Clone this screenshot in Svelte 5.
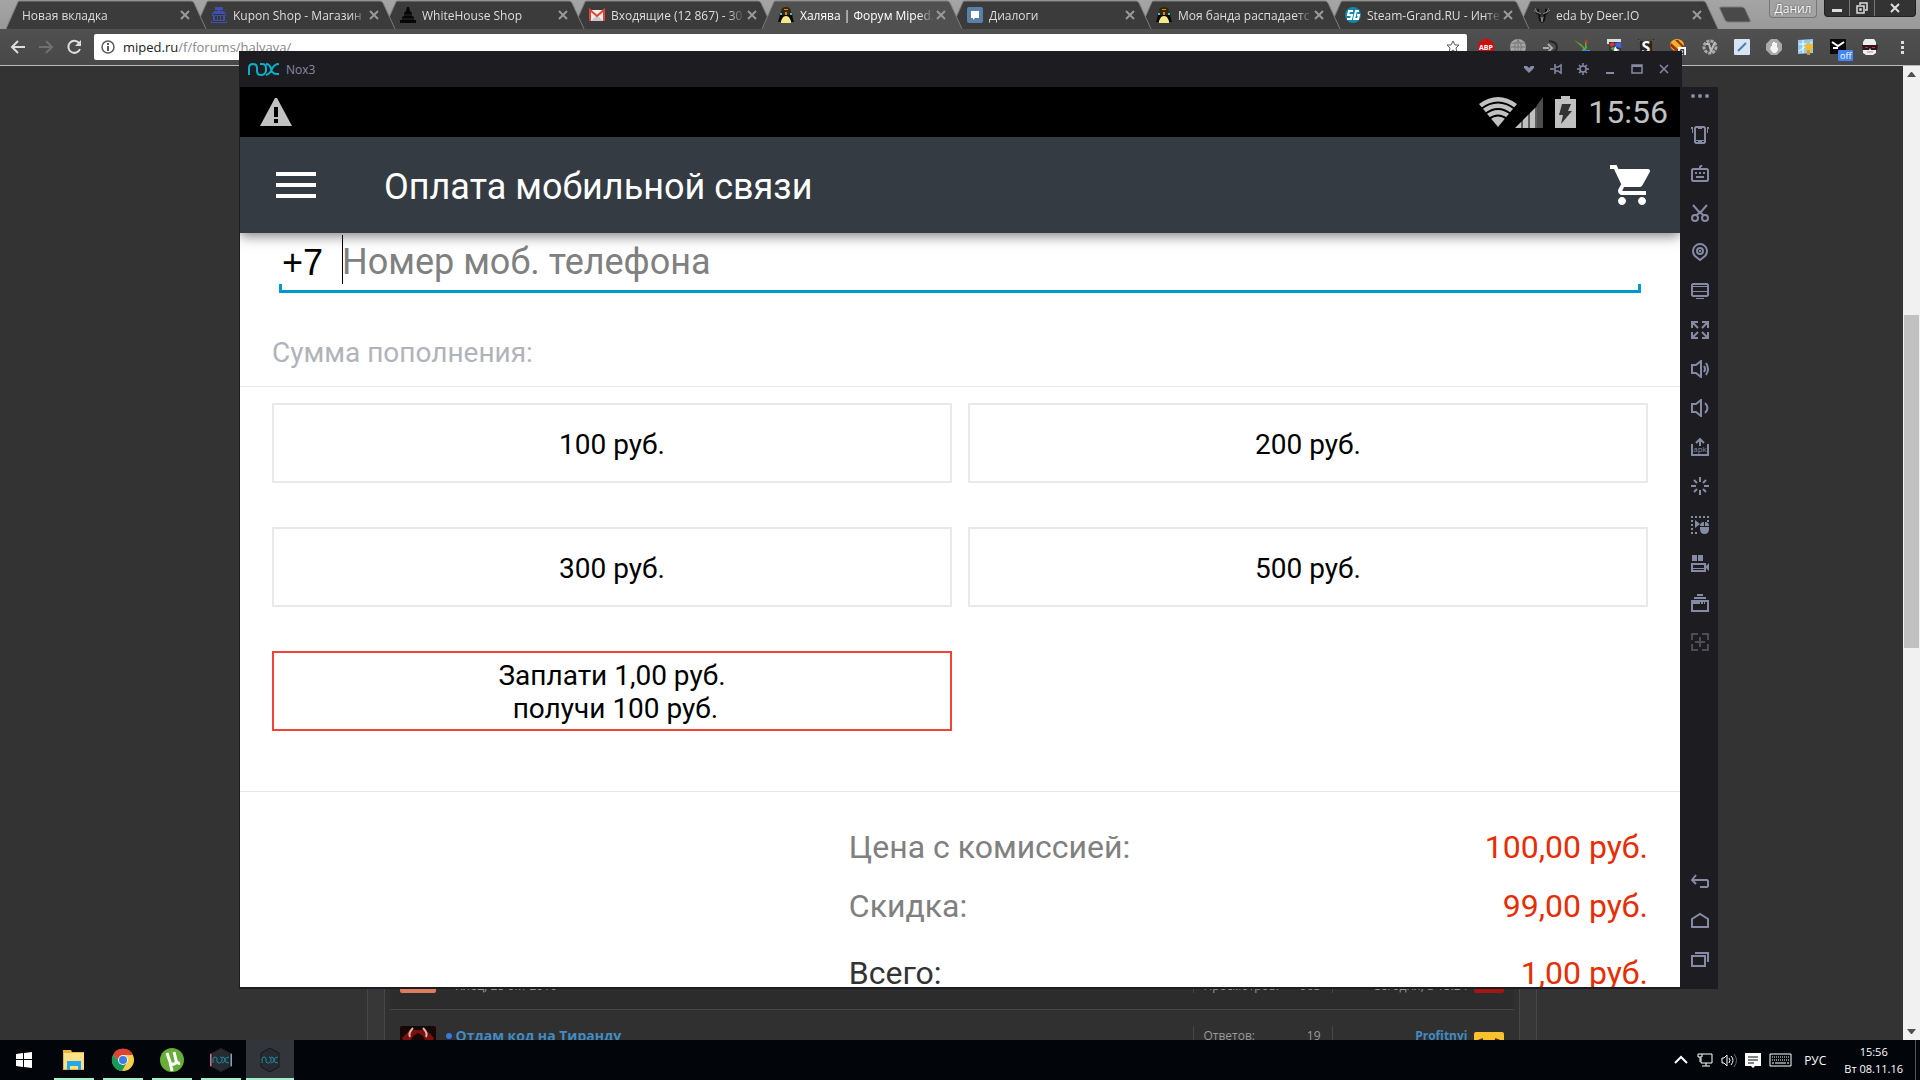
<script lang="ts">
    type Glyph = { label: string; stroke?: string; fill?: string; text?: string; dim?: boolean };

    const tabs = [
        { title: 'Новая вкладка', icon: '' },
        { title: 'Kupon Shop - Магазин', icon: 'kupon' },
        { title: 'WhiteHouse Shop', icon: 'house' },
        { title: 'Входящие (12 867) - 30', icon: 'gmail' },
        { title: 'Халява | Форум Miped.', icon: 'miped', active: true },
        { title: 'Диалоги', icon: 'vk' },
        { title: 'Моя банда распадаетс', icon: 'miped' },
        { title: 'Steam-Grand.RU - Инте', icon: 'steam' },
        { title: 'eda by Deer.IO', icon: 'deer' }
    ];

    const extensions = ['abp', 'globe', 'arrow', 'bird', 'cube', 's', 'bee', 'gear', 'pen', 'hand', 'map', 'mail', 'mask'];

    const tools: Glyph[] = [
        { label: 'Ещё', fill: 'M0 9a2 2 0 1 0 4 0a2 2 0 1 0-4 0M7 9a2 2 0 1 0 4 0a2 2 0 1 0-4 0M14 9a2 2 0 1 0 4 0a2 2 0 1 0-4 0' },
        { label: 'Встряхнуть', stroke: 'M5 1h8l1 1v14l-1 1H5l-1-1V2zM7 2h4', fill: 'M4 14h10v1h-3v1H7v-1H4zM0 1h2v6H1V3H0zM18 1h-2v6h1V3h1z' },
        { label: 'Клавиатура', stroke: 'M2 4h14l1 1v10l-1 1H2l-1-1V5zM9 4V2l2-2M5 12h8', fill: 'M4 7h2v2H4zM8 7h2v2H8zM12 7h2v2h-2z' },
        { label: 'Ножницы', stroke: 'M2 1l7 8l7-8M1 14a3 3 0 1 0 6 0a3 3 0 1 0-6 0M11 14a3 3 0 1 0 6 0a3 3 0 1 0-6 0M6 11l3-3l3 3' },
        { label: 'Местоположение', stroke: 'M9 17L4 13A7 7 0 1 1 14 13zM6 8a3 3 0 1 0 6 0a3 3 0 1 0-6 0', fill: 'M8 7h2v2H8z' },
        { label: 'Экран', stroke: 'M2 2h14l1 1v10l-1 1H2l-1-1V3z', fill: 'M1 4h16v1H1zM1 9h16v1H1zM5 16h8v1H5z' },
        { label: 'Во весь экран', stroke: 'M1 7V1h6M1 1l6 6M11 1h6v6M17 1l-6 6M1 11v6h6M1 17l6-6M17 11v6h-6M17 17l-6-6' },
        { label: 'Громче', stroke: 'M10 1v16l-5-4H1V5h4zM13 6q2 3 0 6M15 3q4 6 0 12' },
        { label: 'Тише', stroke: 'M10 1v16l-5-4H1V5h4zM14 4q5 5 0 10' },
        { label: 'Установить APK', stroke: 'M1 6v11h16V6M9 8V1M5 5l4-4l4 4', text: 'apk' },
        { label: 'Очистить', stroke: 'M9 0v5M9 13v5M0 9h5M13 9h5M3 3l3 3M12 12l3 3M15 3l-3 3M6 12l-3 3' },
        { label: 'Макрос', fill: 'M0 0h2v2H0zM4 0h2v2H4zM8 0h2v2H8zM12 0h2v2h-2zM16 0h2v2h-2zM0 4h2v2H0zM0 8h2v2H0zM0 12h2v2H0zM0 16h2v2H0zM4 16h2v2H4zM16 4h2v2h-2zM4 4l5 4l-5 4zM9 10q0-4 4-4v4zM14 10V6q4 0 4 4zM9 11h9v2q0 5-4.500 5T9 13z' },
        { label: 'Запись видео', stroke: 'M1 9h13v7H1z', fill: 'M1 13h13v1H1zM1 0h5v6H1zM7 0h5v6H7zM15 11l3-3v8l-3-3z' },
        { label: 'Мультиокна', stroke: 'M1 7h16v10H1z', fill: 'M6 0h6v2H6zM3 3h12v2H3zM1 7h8v3H1zM10 8h2v2h-2zM13 8h1v2h-1zM16 8h1v2h-1z' },
        { label: 'Добавить', stroke: 'M1 7V1h6M11 1h6v6M17 11v6h-6M7 17H1v-6M9 4v10M4 9h10', dim: true }
    ];

    const navKeys: Glyph[] = [
        { label: 'Назад', stroke: 'M5 2L1 7l4 4M1 7h15l1 1v5l-1 1H9' },
        { label: 'Домой', stroke: 'M1 15V7l8-5l8 5v8z' },
        { label: 'Недавние', stroke: 'M1 5h13v10H1zM4 2h13v9' }
    ];

    const windowKeys: Glyph[] = [
        { label: 'Меню', fill: 'M1 3h3l2 2l2-2h3v2l-5 5l-5-5z' },
        { label: 'Закрепить', stroke: 'M0 6h4M5 1v10M5 4h3l3-2v8L8 8H5' },
        { label: 'Настройки', stroke: 'M3 6a3 3 0 1 0 6 0a3 3 0 1 0-6 0M6 0v3M6 9v3M0 6h3M9 6h3M2 2l2 2M8 8l2 2M10 2L8 4M4 8l-2 2' },
        { label: 'Свернуть', fill: 'M2 9h8v2H2z' },
        { label: 'Развернуть', stroke: 'M1 2h10v8H1z', fill: 'M1 2h10v2H1z' },
        { label: 'Закрыть', stroke: 'M2 2l8 8M10 2l-8 8' }
    ];

    const amounts = ['100 руб.', '200 руб.', '300 руб.', '500 руб.', 'Заплати 1,00 руб.\n получи 100 руб.'];

    const totals = [
        { label: 'Цена с комиссией:', value: '100,00 руб.' },
        { label: 'Скидка:', value: '99,00 руб.' },
        { label: 'Всего:', value: '1,00 руб.', total: true }
    ];

    const tasks = ['explorer', 'chrome', 'utorrent', 'noxmulti', 'nox'];

    let selected = $state(4);
    let phone = $state('');
</script>

{#snippet glyph(g: Glyph, size: number, width: number)}
    <svg class="glyph" width={size} height={size} viewBox="0 0 {size} {size}" aria-hidden="true">
        {#if g.stroke}<path d={g.stroke} fill="none" stroke="currentColor" stroke-width={width} />{/if}
        {#if g.fill}<path d={g.fill} fill="currentColor" />{/if}
        {#if g.text}<text x="9" y="14" font-size="8" text-anchor="middle" fill="currentColor">{g.text}</text>{/if}
    </svg>
{/snippet}

{#snippet favicon(name: string)}
    <svg width="16" height="16" viewBox="0 0 16 16" aria-hidden="true">
        {#if name === 'kupon'}
            <path fill="#3f4fb0" d="M4 0h8v3H9v1h4l2 3v2h-1v5h2v2H0v-2h2V9H1V7l2-3h4V3H4z" />
            <path fill="#35353a" d="M4 9h2v4H4zM7 9h2v4H7zM10 9h2v4h-2zM2 7h12v1H2zM1 14h14v1H1z" />
        {:else if name === 'house'}
            <path fill="#060606" d="M7 0h2l1 4l2 2v3l2 1v3h2v3H0v-3h2v-3l2-1V6l2-2z" />
            <path stroke="#2c2c2c" d="M4 8h8M2 12h12" />
        {:else if name === 'gmail'}
            <path fill="#eee" d="M0 3h16v11H0z" />
            <path fill="#c9c9c9" d="M2 14l6-6l6 6z" />
            <path fill="none" stroke="#e0432f" stroke-width="2" d="M1 14V3l7 6l7-6v11" />
        {:else if name === 'miped'}
            <path fill="#38250b" d="M3 5q0-5 5-5t5 5l2 3l-2 1H3L1 8z" />
            <path fill="#090909" d="M2 8h12l2 7H0z" />
            <path fill="#f4e889" d="M4 12q1-3 4-3t4 3l1 2v2H3v-2z" />
            <path fill="#37bfe0" d="M2 6h2v2H2zM12 6h2v2h-2z" />
            <path fill="#c98a20" d="M6 2h4v1H6zM7 5h2v3H7z" />
        {:else if name === 'vk'}
            <rect width="16" height="16" rx="2" fill="#5a80aa" />
            <path fill="#fff" d="M4 4h8v7H8l-2 2v-2H4z" />
        {:else if name === 'steam'}
            <circle cx="8" cy="8" r="8" fill="#1787a8" />
            <path fill="none" stroke="#fff" stroke-width="2" d="M8 4H4L3 8h4l-1 4H2M14 4h-3l-2 8h4l1-4h-2" />
        {:else if name === 'deer'}
            <path fill="none" stroke="#111" stroke-width="2" d="M1 1l2 5l4 2M15 1l-2 5l-4 2M4 2v4M12 2v4M5 8l1 5l2 2l2-2l1-5" />
            <path fill="none" stroke="#8b8b8b" d="M0 3l4 3M16 3l-4 3M1 1l2 4l4 2M15 1l-2 4l-4 2M7 10l1 5l1-5" />
        {/if}
    </svg>
{/snippet}

{#snippet extension(name: string)}
    <svg width="16" height="16" viewBox="0 0 16 16" aria-hidden="true">
        {#if name === 'abp'}
            <path fill="#d00d0d" d="M5 0h6l5 5v6l-5 5H5l-5-5V5z" />
            <text x="8" y="11" font-size="7" font-weight="700" text-anchor="middle" fill="#fff">ABP</text>
        {:else if name === 'globe'}
            <circle cx="8" cy="8" r="8" fill="#a5a5a5" />
            <path fill="none" stroke="#777" d="M0 8h16M2 4h12M2 12h12M8 0v16M8 1q-7 7 0 14M8 1q7 7 0 14" />
        {:else if name === 'arrow'}
            <path fill="none" stroke="#252525" stroke-width="2" d="M7 2q8 1 8 6t-7 6" />
            <path fill="none" stroke="#aaa" stroke-width="2" d="M1 9h6M6 5l4 4l-4 4" />
        {:else if name === 'bird'}
            <path fill="#5eaa2d" d="M0 1l7 4l4 4V3l1-2l1 8l-5 6l1-6z" />
            <path fill="#b83c2a" d="M11 2l2-2l1 4h-2z" />
            <path fill="#4285f4" d="M8 11h8v5H8z" />
        {:else if name === 'cube'}
            <path fill="#ddd" d="M1 0h14v5H1z" />
            <path fill="#334" d="M3 3h12v12H3z" />
            <path fill="#db372d" d="M3 5l4-2l2 3l-4 2z" />
            <path fill="#4663df" d="M9 4l6-1v6l-5-1z" />
            <path fill="#49a644" d="M4 9l4-1l1 5z" />
            <path fill="#fff" d="M9 7l2 3l3 1l-3 1l-2 3l-1-4z" />
        {:else if name === 's'}
            <path fill="#28251f" d="M0 0h16v16H0z" />
            <path fill="none" stroke="#767064" d="M1 1h14v14H1z" />
            <text x="8" y="14" font-size="16" font-weight="700" text-anchor="middle" fill="#fff">S</text>
        {:else if name === 'bee'}
            <ellipse cx="7" cy="6" rx="7" ry="6" fill="#edb329" />
            <path fill="#a62912" d="M1 4l9 8H6L0 7zM8 1l6 6v3L5 1z" />
            <path fill="#fff" d="M8 8h8v8H8z" />
            <text x="12" y="15" font-size="8" font-weight="700" text-anchor="middle" fill="#222">q</text>
        {:else if name === 'gear'}
            <circle cx="8" cy="8" r="6" fill="none" stroke="#aaa" stroke-width="3" stroke-dasharray="3 1" />
            <path fill="none" stroke="#bbb" stroke-width="2" d="M4 5h3l2 7l4-9" />
        {:else if name === 'pen'}
            <rect width="16" height="16" rx="1" fill="#d7e4f4" />
            <path stroke="#5179b7" stroke-width="2" d="M4 12l8-8" />
        {:else if name === 'hand'}
            <path fill="#aaa" d="M5 0h6l5 5v6l-5 5H5l-5-5V5z" />
            <path fill="#f4f4f4" d="M5 7h1V4h1V3h2v1h2v5l1-1v3l-2 3H7l-3-4z" />
        {:else if name === 'map'}
            <path fill="#95caf0" d="M0 1l15-1v14L0 15z" />
            <path stroke="#fff" d="M1 5h13M5 1v13M1 12L14 3" />
            <circle cx="11" cy="8" r="4" fill="#edbd34" />
            <path fill="#d49a20" d="M9 11h3v5H9z" />
        {:else if name === 'mail'}
            <path fill="#080808" d="M0 0h16v15H0z" />
            <path fill="none" stroke="#fff" stroke-width="2" d="M2 3l6 4l6-4M3 9h5" />
        {:else if name === 'mask'}
            <path fill="#eee" d="M3 0h9l2 3v11l-3 2H4l-3-2V3z" />
            <path fill="#2e171b" d="M0 6h16l-1 5H9L8 9l-1 2H1z" />
            <path fill="#d02e36" d="M3 8h3v1H3zM10 8h3v1h-3z" />
            <path stroke="#999" d="M5 13h6" />
        {/if}
    </svg>
{/snippet}

{#snippet taskIcon(name: string)}
    <svg width="24" height="24" viewBox="0 0 24 24" aria-hidden="true">
        {#if name === 'explorer'}
            <path fill="#e8b73c" d="M1 2h8l1 2h12v18H1z" />
            <path fill="#ffe08a" d="M2 5h20v16H2z" />
            <path fill="#24a9e8" d="M5 22v-9h14v9h-3v-4H8v4z" />
        {:else if name === 'chrome'}
            <circle cx="12" cy="12" r="11" fill="#f6cf4a" />
            <path fill="#dc4437" d="M2 7A11 11 0 0 1 22 7H12L8 13z" />
            <path fill="#159a5b" d="M2 7a11 11 0 0 0 9 16l5-9l-8-1z" />
            <circle cx="12" cy="12" r="5" fill="#f3f3f3" />
            <circle cx="12" cy="12" r="4" fill="#3d7de4" />
        {:else if name === 'utorrent'}
            <circle cx="12" cy="12" r="12" fill="#68ad38" />
            <path fill="none" stroke="#fff" stroke-width="3" d="M7 5l3 9q1 3 4 2t2-4l-2-8M16 12q1 4 4 3M10 14l2 9" />
        {:else}
            {#if name === 'noxmulti'}
                <path fill="#cf65c4" d="M12 1L1 6v12l11 5z" />
                <path fill="#55b4dc" d="M12 1l11 5v12l-11 5z" />
                <path fill="#eb9a61" d="M2 6h2v12H2zM20 6h2v12h-2z" />
            {/if}
            <path fill="#292b32" stroke="#15171c" d="M12 0l9 5v14l-9 5l-9-5V5z" />
            <path fill="none" stroke="#158ea3" stroke-width="1" d="M4 15v-4q0-2 2-2t2 2v2q0 2 2 2t3-2v-2q0-2-2-2M13 9q3 0 3 3t4 3M20 9q-3 0-4 3t-3 3" />
        {/if}
    </svg>
{/snippet}

<div class="desktop">
    <nav class="tab-strip" aria-label="Вкладки">
        {#each tabs as tab, i}
            <div class="tab" class:active={tab.active} style="z-index: {tab.active ? 20 : 10 - i}">
                <svg class="tab-shape" viewBox="0 0 202 29" aria-hidden="true">
                    <path d="M0 29L12 2Q12 1 14 1H186Q188 1 189 3L201 29" />
                </svg>
                {#if tab.icon}{@render favicon(tab.icon)}{/if}
                <a class="tab-title" href="#tab{i}">{tab.title}</a>
                <button class="tab-close" aria-label="Закрыть вкладку">
                    <svg width="10" height="10" viewBox="0 0 10 10"><path d="M1 1l8 8M9 1l-8 8" stroke="currentColor" stroke-width="2" /></svg>
                </button>
            </div>
        {/each}
        <button class="new-tab" aria-label="Новая вкладка">
            <svg width="34" height="17" viewBox="0 0 34 17"><path d="M3 1h21q2 0 3 2l5 11q1 2-1 2H10q-2 0-3-2L2 3q-1-2 1-2z" fill="#494949" stroke="#7c7c7c" /></svg>
        </button>
        <button class="profile">Данил</button>
        <div class="window-buttons">
            <button aria-label="Свернуть"><svg width="12" height="12" viewBox="0 0 12 12"><path d="M1 7h10v3H1z" fill="#ddd" /></svg></button>
            <button aria-label="Восстановить"><svg width="12" height="12" viewBox="0 0 12 12"><path d="M4 3V1h7v7H9M1 4h7v7H1zM4 7h1v1H4z" fill="none" stroke="#ddd" stroke-width="1.500" /></svg></button>
            <button class="wide" aria-label="Закрыть"><svg width="12" height="12" viewBox="0 0 12 12"><path d="M2 2l8 8M10 2l-8 8" stroke="#ddd" stroke-width="2" /></svg></button>
        </div>
    </nav>

    <header class="toolbar">
        <button aria-label="Назад"><svg width="16" height="16" viewBox="0 0 16 16"><path d="M15 8H2M8 2L2 8l6 6" fill="none" stroke="#ddd" stroke-width="2" /></svg></button>
        <button aria-label="Вперёд" disabled><svg width="16" height="16" viewBox="0 0 16 16"><path d="M1 8h13M8 2l6 6l-6 6" fill="none" stroke="#707070" stroke-width="2" /></svg></button>
        <button aria-label="Обновить"><svg width="16" height="16" viewBox="0 0 16 16"><path d="M13 4a6 6 0 1 0 1 6" fill="none" stroke="#ddd" stroke-width="2" /><path d="M15 1v6H9z" fill="#ddd" /></svg></button>
        <div class="address">
            <svg width="14" height="14" viewBox="0 0 14 14" aria-hidden="true"><circle cx="7" cy="7" r="6" fill="none" stroke="#5a5a5a" stroke-width="1.500" /><path d="M6 6h2v5H6zM6 3h2v2H6z" fill="#5a5a5a" /></svg>
            <a class="url" href="#page">miped.ru<span>/f/forums/halyava/</span></a>
            <button aria-label="В закладки"><svg width="14" height="14" viewBox="0 0 14 14"><path d="M7 1l2 4h4l-3 3l1 5l-4-3l-4 3l1-5l-3-3h4z" fill="none" stroke="#5a5a5a" /></svg></button>
        </div>
        <div class="extensions">
            {#each extensions as name}
                <button aria-label={name}>
                    {@render extension(name)}
                    {#if name === 'mail'}<span class="badge">off</span>{/if}
                </button>
            {/each}
            <button aria-label="Меню"><svg width="16" height="16" viewBox="0 0 16 16"><path d="M7 2h3v3H7zM7 7h3v3H7zM7 12h3v3H7z" fill="#ddd" /></svg></button>
        </div>
    </header>

    <div class="viewport">
        <main class="page">
            <div class="forum">
                <div class="filler"></div>
                <div class="thread old">
                    <span class="avatar peach"></span>
                    <div class="thread-name"><span>Ялец, 28 окт 2016</span></div>
                    <div class="stat"><span>Просмотров:</span><span>963</span></div>
                    <div class="last"><span>Сегодня, в 15:24</span></div>
                    <span class="mini red"></span>
                </div>
                <div class="thread new">
                    <svg class="avatar" viewBox="0 0 36 36" aria-hidden="true">
                        <path fill="#180707" d="M0 0h36v36H0z" />
                        <path fill="#7c100f" d="M2 12l8-8h16l8 8l-4 8H6z" />
                        <path fill="#180707" d="M10 16l3-6l5-3l5 3l3 6z" />
                        <path fill="none" stroke="#d9b9ae" stroke-width="2" d="M13 2q-5 5-3 9M23 2q5 5 3 9" />
                    </svg>
                    <div class="thread-name"><i></i><a href="#thread">Отдам код на Тиранду</a></div>
                    <div class="stat"><span>Ответов:</span><span>19</span></div>
                    <div class="last"><a href="#user">Profitnyi</a></div>
                    <svg class="mini yellow" viewBox="0 0 30 30" aria-hidden="true"><path d="M4 9l5-2M21 7l5 2" stroke="#4a3410" stroke-width="2" /></svg>
                </div>
            </div>
        </main>
        <div class="scrollbar" aria-hidden="true">
            <svg width="9" height="5" viewBox="0 0 9 5"><path d="M0 5l4-5h1l4 5z" fill="#505050" /></svg>
            <div class="track"><div class="thumb"></div></div>
            <svg width="9" height="5" viewBox="0 0 9 5"><path d="M0 0h9L5 5H4z" fill="#505050" /></svg>
        </div>
    </div>

    <section class="emulator" aria-label="Nox3">
        <div class="title-bar">
            <svg width="31" height="13" viewBox="0 0 31 13" aria-hidden="true">
                <path d="M1 12V5q0-4 4-4t4 4v3q0 4 4 4t5-4V5q0-4-4-4h-2M18 1q4 0 5 5t6 5h2M31 1q-5 0-7 5t-6 6" fill="none" stroke="#08afc8" stroke-width="2" />
            </svg>
            <span class="title">Nox3</span>
            {#each windowKeys as key}
                <button aria-label={key.label}>{@render glyph(key, 12, 1.5)}</button>
            {/each}
        </div>

        <div class="screen">
            <div class="status-bar">
                <svg width="32" height="28" viewBox="0 0 32 28" aria-hidden="true">
                    <path d="M15 0h2l15 28H0z" fill="#c1c1c1" />
                    <path d="M14 9h4v10h-4zM14 21h4v4h-4z" fill="#000" />
                </svg>
                <div class="indicators">
                    <svg width="64" height="32" viewBox="0 0 64 32" aria-hidden="true">
                        <path d="M0 8Q19-6 38 8L19 31z" fill="#c1c1c1" />
                        <path d="M2 13q17-13 34 0M6 18q13-10 26 0M10 23q9-7 18 0" fill="none" stroke="#000" stroke-width="2" />
                        <path d="M36 32L58 10v22z" fill="#c1c1c1" />
                        <path d="M58 9l6-8v31h-6z" fill="#4d4d4d" />
                        <path d="M43 20v12M50 10v22M57 8v24" stroke="#000" />
                    </svg>
                    <svg width="21" height="32" viewBox="0 0 21 32" aria-hidden="true">
                        <path d="M6 0h9v3h6v29H0V3h6z" fill="#c1c1c1" />
                        <path d="M7 8h9l-3 7h4L6 28l2-9H4z" fill="#333" />
                    </svg>
                    <time>15:56</time>
                </div>
            </div>

            <div class="app-bar">
                <button aria-label="Меню"><svg width="40" height="26" viewBox="0 0 40 26"><path d="M0 2h40M0 13h40M0 24h40" stroke="#fff" stroke-width="4" /></svg></button>
                <h1>Оплата мобильной связи</h1>
                <button aria-label="Корзина">
                    <svg width="48" height="48" viewBox="0 0 24 24"><path fill="#fff" d="M7 18c-1.100 0-1.990.9-1.990 2S5.900 22 7 22s2-.9 2-2-.9-2-2-2zM1 2v2h2l3.600 7.590-1.350 2.450c-.16.28-.25.61-.25.96 0 1.100.9 2 2 2h12v-2H7.420c-.14 0-.25-.11-.25-.25l.03-.12.9-1.630h7.450c.75 0 1.410-.41 1.750-1.030l3.580-6.490c.08-.14.12-.31.12-.48 0-.55-.45-1-1-1H5.210l-.94-2H1zm16 16c-1.100 0-1.990.9-1.990 2s.89 2 1.990 2 2-.9 2-2-.9-2-2-2z" /></svg>
                </button>
            </div>

            <form class="payment">
                <div class="phone">
                    <label for="phone">+7</label>
                    <div class="phone-input">
                        <span class="caret"></span>
                        <input id="phone" type="tel" placeholder="Номер моб. телефона" bind:value={phone} />
                    </div>
                </div>
                <div class="underline"></div>
                <h2 id="sum">Сумма пополнения:</h2>
                <div class="amounts" role="group" aria-labelledby="sum">
                    {#each amounts as amount, i}
                        <button type="button" class:selected={selected === i} onclick={() => (selected = i)}>{amount}</button>
                    {/each}
                </div>
                <dl class="totals">
                    {#each totals as row}
                        <div class:total={row.total}>
                            <dt>{row.label}</dt>
                            <dd>{row.value}</dd>
                        </div>
                    {/each}
                </dl>
            </form>
        </div>

        <aside class="side">
            {#each tools as tool}
                <button class:dim={tool.dim} aria-label={tool.label}>{@render glyph(tool, 18, 2)}</button>
            {/each}
            <div class="filler"></div>
            {#each navKeys as key}
                <button aria-label={key.label}>{@render glyph(key, 18, 2)}</button>
            {/each}
        </aside>
    </section>

    <footer class="taskbar">
        <button class="start" aria-label="Пуск">
            <svg width="16" height="16" viewBox="0 0 16 16"><path fill="#fff" d="M0 2l7-1v6H0zM8 1l8-1v7H8zM0 8h7v7l-7-1zM8 8h8v8l-8-1z" /></svg>
        </button>
        {#each tasks as name}
            <button class="task" class:current={name === 'nox'} aria-label={name}>{@render taskIcon(name)}</button>
        {/each}
        <div class="tray">
            <button aria-label="Скрытые значки"><svg width="16" height="16" viewBox="0 0 16 16"><path d="M2 11l6-6l6 6" fill="none" stroke="#fff" stroke-width="2" /></svg></button>
            <button aria-label="Сеть"><svg width="16" height="16" viewBox="0 0 16 16"><path d="M5 2h10v9H4V6M9 11v3M5 14h8M1 2h4v3H1zM3 5v5" fill="none" stroke="#fff" /></svg></button>
            <button aria-label="Громкость"><svg width="16" height="16" viewBox="0 0 16 16"><path d="M1 6h2l3-3v11l-3-3H1zM8 6q2 2 0 5M10 4q4 4 0 9" fill="none" stroke="#fff" /><path d="M13 2q5 6 0 13" fill="none" stroke="#666" /></svg></button>
            <button aria-label="Уведомления"><svg width="16" height="16" viewBox="0 0 16 16"><path d="M0 1h16v13h-6l-2 2l-2-2H0z" fill="#fff" /><path d="M3 5h10M3 8h10M3 11h6" stroke="#02060b" /></svg></button>
            <button aria-label="Клавиатура"><svg width="23" height="14" viewBox="0 0 23 14"><path d="M1 1h21v12H1z" fill="none" stroke="#fff" /><path d="M3 4h17M3 7h17" stroke="#fff" stroke-dasharray="1 1" /><path d="M3 10h2M6 10h11M18 10h2" stroke="#fff" /></svg></button>
            <button class="lang">РУС</button>
            <time class="clock">15:56<br />Вт 08.11.16</time>
        </div>
    </footer>
</div>

<style>
    :global(body) {
        background: #333;
    }

    .desktop {
        position: relative;
        display: flex;
        flex-direction: column;
        height: 100vh;
        overflow: hidden;
        font-family: "Open Sans", "Noto Sans", sans-serif;
        font-size: 12px;
        color: #ddd;
    }

    button {
        display: flex;
        align-items: center;
        justify-content: center;
        padding: 0;
        border: 0;
        background: none;
        color: inherit;
        font: inherit;
    }

    a {
        color: inherit;
        text-decoration: none;
    }

    svg {
        display: block;
        flex: none;
    }

    .tab-strip {
        display: flex;
        height: 29px;
        padding: 0 4px 0 6px;
        background: linear-gradient(#a5a5a5, #999);
        box-sizing: border-box;
    }

    .tab {
        position: relative;
        display: flex;
        flex: 0 1 201px;
        align-items: center;
        gap: 6px;
        min-width: 0;
        margin-right: -12px;
        padding: 1px 17px 0 16px;
        box-sizing: border-box;
    }

    .tab-shape {
        position: absolute;
        inset: 0;
        z-index: -1;
        width: 100%;
        height: 29px;
        fill: #3b3b3b;
        stroke: #7c7c7c;
    }

    .tab.active .tab-shape {
        fill: #505050;
    }

    .tab-title {
        flex: 1;
        min-width: 0;
        margin-right: -4px;
        overflow: hidden;
        white-space: nowrap;
        mask-image: linear-gradient(to left, transparent, #000 16px);
    }

    .tab.active .tab-title {
        color: #fff;
    }

    .tab-close {
        color: #999;
    }

    .new-tab {
        width: 34px;
        height: 17px;
        margin: 6px auto 0 11px;
    }

    .profile {
        width: 48px;
        height: 18px;
        margin-right: 7px;
        border: 1px solid #777;
        border-top: 0;
        border-radius: 0 0 4px 4px;
        background: #a3a3a3;
        color: #fff;
        text-shadow: 0 0 2px #333;
        box-sizing: border-box;
    }

    .window-buttons {
        display: flex;
        height: 17px;
        border: 1px solid #222;
        border-top: 0;
        border-radius: 0 0 4px 4px;
        background: #333;
        box-sizing: border-box;
    }

    .window-buttons button {
        width: 25px;
        border-right: 1px solid #777;
    }

    .window-buttons .wide {
        width: 40px;
        border: 0;
    }

    .toolbar {
        display: flex;
        align-items: center;
        height: 37px;
        padding: 0 10px;
        border-bottom: 1px solid #bbb;
        background: linear-gradient(#505050, #484848);
        box-sizing: border-box;
    }

    .toolbar > button {
        margin-right: 12px;
    }

    .toolbar > .address {
        display: flex;
        flex: 1;
        align-items: center;
        gap: 8px;
        height: 26px;
        margin-right: 11px;
        padding: 0 7px;
        border-radius: 2px;
        background: #fff;
        color: #222;
        box-sizing: border-box;
    }

    .url {
        flex: 1;
        font-size: 13px;
    }

    .url span {
        color: #888;
    }

    .extensions {
        display: flex;
        gap: 16px;
    }

    .extensions button {
        position: relative;
    }

    .badge {
        position: absolute;
        top: 11px;
        left: 8px;
        padding: 0 2px;
        border-radius: 1px;
        background: #4285f4;
        color: #fff;
        font-size: 9px;
        line-height: 11px;
    }

    .viewport {
        display: flex;
        flex: 1;
        min-height: 0;
        background: #333;
    }

    .page {
        display: flex;
        flex: 1;
        justify-content: center;
    }

    .forum {
        display: flex;
        flex-direction: column;
        width: 1170px;
        padding: 0 22px;
        border: solid #474747;
        border-width: 0 1px;
        background: linear-gradient(to right, #373737 16px, #474747 16px, #474747 17px, #303030 17px, #303030 1151px, #474747 1151px, #474747 1152px, #373737 1152px);
        color: #999;
        box-sizing: border-box;
    }

    .filler {
        flex: 1;
    }

    .thread {
        display: flex;
        height: 30px;
        padding: 0 10px;
        overflow: hidden;
        box-sizing: border-box;
    }

    .thread.old {
        align-items: flex-end;
        height: 63px;
        padding-bottom: 16px;
        border-bottom: 1px solid #474747;
        background: #2c2c2c;
        line-height: 14px;
    }

    .thread.new {
        align-items: flex-start;
        padding-top: 16px;
        line-height: 20px;
    }

    .avatar {
        width: 36px;
        height: 36px;
        border-radius: 2px;
    }

    .peach {
        background: #df7c60;
    }

    .thread-name {
        display: flex;
        flex: 1;
        align-items: center;
        padding-left: 20px;
    }

    .thread-name i {
        width: 6px;
        height: 6px;
        margin: 0 4px 0 -10px;
        border-radius: 50%;
        background: #3978dd;
    }

    .thread-name a,
    .last a {
        color: #438bc2;
        font-weight: 700;
    }

    .thread-name a {
        font-size: 14px;
    }

    .stat {
        display: flex;
        justify-content: space-between;
        width: 140px;
        padding: 0 11px 0 10px;
        border: solid #474747;
        border-width: 0 1px;
        box-sizing: border-box;
    }

    .last {
        width: 141px;
        padding-right: 6px;
        text-align: right;
        box-sizing: border-box;
    }

    .mini {
        width: 30px;
        height: 30px;
        border-radius: 2px;
    }

    .red {
        background: #a51512;
    }

    .yellow {
        margin-top: 6px;
        background: #fbc02d;
    }

    .scrollbar {
        display: flex;
        flex-direction: column;
        align-items: center;
        width: 17px;
        padding: 6px 0;
        background: #f1f1f1;
        box-sizing: border-box;
    }

    .track {
        flex: 1;
        width: 100%;
        padding: 0 1px;
        box-sizing: border-box;
    }

    .thumb {
        position: relative;
        top: 25%;
        height: 35%;
        background: #c1c1c1;
    }

    .emulator {
        position: absolute;
        top: 51px;
        right: 202px;
        bottom: 91px;
        left: 239px;
        z-index: 30;
        display: grid;
        grid-template-rows: 36px 1fr;
        grid-template-columns: 1fr 38px;
        color: #868ba5;
    }

    .title-bar {
        display: flex;
        align-items: center;
        gap: 15px;
        margin-right: -2px;
        padding: 0 12px 0 9px;
        background: #1d1c21;
    }

    .title {
        flex: 1;
        margin-left: -8px;
    }

    .screen {
        grid-row: 2;
        display: flex;
        flex-direction: column;
        min-height: 0;
        overflow: hidden;
        border: solid #1d1c21;
        border-width: 0 0 2px 1px;
        background: #fff;
        font-family: Roboto, sans-serif;
    }

    .status-bar {
        display: flex;
        flex: none;
        align-items: center;
        justify-content: space-between;
        height: 50px;
        padding: 0 12px 0 20px;
        background: #000;
        color: #c1c1c1;
        box-sizing: border-box;
    }

    .indicators {
        display: flex;
        align-items: center;
        gap: 12px;
        font-size: 32px;
        line-height: 48px;
    }

    .app-bar {
        position: relative;
        z-index: 1;
        display: flex;
        flex: none;
        align-items: center;
        height: 96px;
        padding: 0 24px 0 36px;
        background: #353b42;
        box-shadow: 0 3px 12px rgba(0, 0, 0, 0.5);
        color: #fff;
        box-sizing: border-box;
    }

    h1 {
        flex: 1;
        margin: 4px 0 0 68px;
        font-size: 36px;
        font-weight: 400;
        line-height: 42px;
    }

    .payment {
        flex: none;
    }

    .phone {
        display: flex;
        margin: 7px 39px 0 42px;
        font-size: 36px;
        line-height: 45px;
    }

    .phone label {
        width: 60px;
        color: #000;
        font-family: "Liberation Sans", Arial, sans-serif;
    }

    .phone-input {
        position: relative;
        flex: 1;
    }

    .phone-input input {
        display: block;
        width: 100%;
        height: 45px;
        padding: 0;
        border: 0;
        outline: 0;
        background: none;
        color: #000;
        font: inherit;
    }

    .phone-input input::placeholder {
        color: #808080;
        opacity: 1;
    }

    .caret {
        position: absolute;
        top: -5px;
        left: 0;
        width: 1px;
        height: 49px;
        background: #000;
    }

    .underline {
        height: 9px;
        margin: -1px 39px 0;
        border: solid #0099cc;
        border-width: 0 3px 3px;
        box-sizing: border-box;
    }

    h2 {
        margin: 0;
        padding: 44px 32px 17px;
        border-bottom: 1px solid #e8e8e8;
        color: #b1b3ba;
        font-size: 28px;
        font-weight: 400;
        line-height: 32px;
    }

    .amounts {
        display: grid;
        grid-template-columns: 1fr 1fr;
        gap: 44px 16px;
        padding: 16px 32px 60px;
        border-bottom: 1px solid #e8e8e8;
    }

    .amounts button {
        height: 80px;
        padding-top: 2px;
        border: 2px solid #e9e9e9;
        color: #000;
        font-size: 28px;
        line-height: 33px;
        white-space: pre;
    }

    .amounts .selected {
        border-color: #f44336;
    }

    .totals {
        display: flex;
        flex-direction: column;
        gap: 19px;
        width: 58%;
        margin: 0 0 0 auto;
        padding: 35px 32px 0 4px;
        color: #808080;
        font-size: 32px;
        line-height: 40px;
        box-sizing: border-box;
    }

    .totals div {
        display: flex;
        justify-content: space-between;
    }

    .totals .total {
        padding-top: 8px;
        color: #333;
    }

    dd {
        margin: 0;
        color: #e52e04;
    }

    .side {
        grid-row: 2;
        grid-column: 2;
        display: flex;
        flex-direction: column;
        align-items: center;
        gap: 21px;
        padding: 0 0 20px 2px;
        background: #1d1c21;
    }

    .side .dim {
        color: #4d4d53;
    }

    .taskbar {
        display: flex;
        gap: 1px;
        height: 40px;
        background: #02060b;
        color: #fff;
    }

    .start {
        width: 48px;
        margin-right: 1px;
    }

    .start,
    .task {
        height: 40px;
    }

    .task {
        width: 48px;
        background: linear-gradient(#a4f0cc, #a4f0cc) 50% 100% / 40px 2px no-repeat;
    }

    .task.current {
        background: linear-gradient(#a4f0cc, #a4f0cc) 0 100% / 100% 2px no-repeat #32363a;
    }

    .tray {
        display: flex;
        align-items: center;
        gap: 8px;
        margin-left: auto;
        margin-right: 4px;
    }

    .lang {
        margin: 0 10px 0 4px;
    }

    .clock {
        padding: 3px 12px 3px 0;
        border-right: 1px solid #555;
        font-size: 11px;
        line-height: 17px;
        text-align: center;
    }
</style>
